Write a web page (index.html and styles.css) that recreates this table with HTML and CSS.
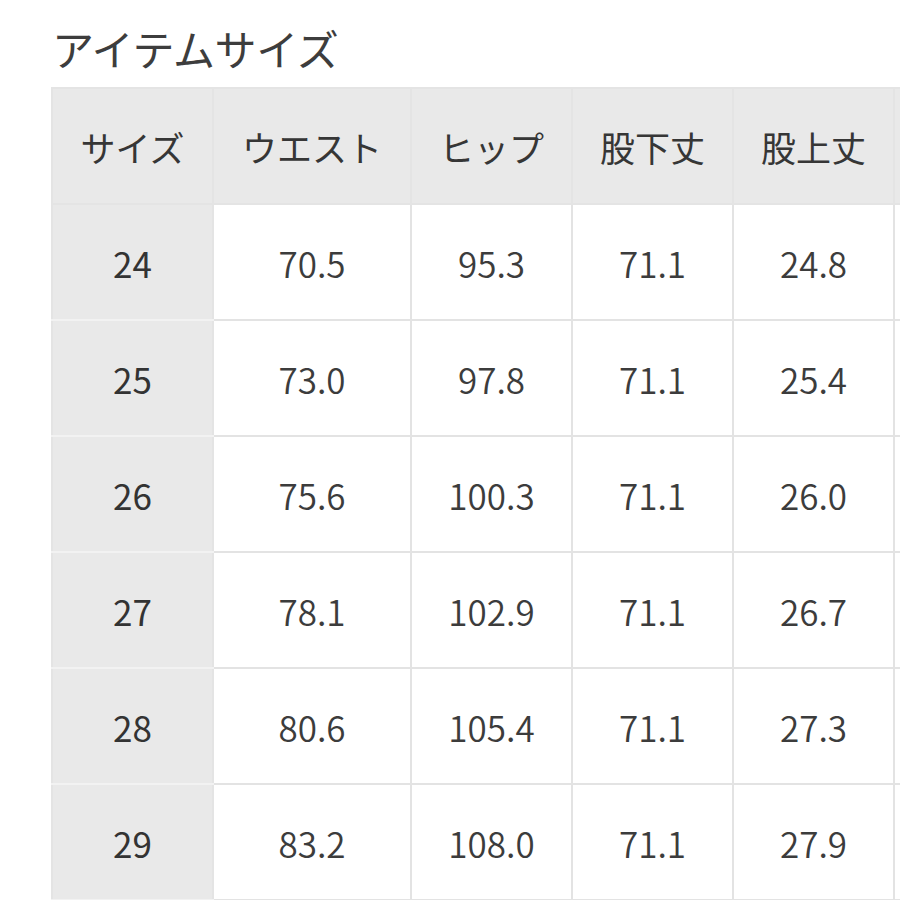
FILE: index.html
```html
<!DOCTYPE html>
<html lang="ja">
<head>
<meta charset="utf-8">
<title>アイテムサイズ</title>
<link rel="stylesheet" href="styles.css">
</head>
<body>
<div class="page">
  <h2 class="title">アイテムサイズ</h2>
  <div class="table-clip">
    <table class="size-table">
      <colgroup>
        <col class="c-size"><col class="c-waist"><col class="c-std"><col class="c-std"><col class="c-std"><col class="c-std">
      </colgroup>
      <thead>
        <tr><th>サイズ</th><th>ウエスト</th><th>ヒップ</th><th>股下丈</th><th>股上丈</th><th></th></tr>
      </thead>
      <tbody>
        <tr><th>24</th><td>70.5</td><td>95.3</td><td>71.1</td><td>24.8</td><td></td></tr>
        <tr><th>25</th><td>73.0</td><td>97.8</td><td>71.1</td><td>25.4</td><td></td></tr>
        <tr><th>26</th><td>75.6</td><td>100.3</td><td>71.1</td><td>26.0</td><td></td></tr>
        <tr><th>27</th><td>78.1</td><td>102.9</td><td>71.1</td><td>26.7</td><td></td></tr>
        <tr><th>28</th><td>80.6</td><td>105.4</td><td>71.1</td><td>27.3</td><td></td></tr>
        <tr><th>29</th><td>83.2</td><td>108.0</td><td>71.1</td><td>27.9</td><td></td></tr>
        <tr><th></th><td></td><td></td><td></td><td></td><td></td></tr>
      </tbody>
    </table>
  </div>
</div>
</body>
</html>
```
FILE: styles.css
```css
html, body {
  margin: 0;
  padding: 0;
  background: #ffffff;
  overflow: hidden;
}
body {
  width: 900px;
  height: 900px;
  font-family: "Noto Sans CJK JP", "Noto Sans", sans-serif;
  color: #3b3b3b;
}
.page {
  padding: 23px 0 0 51px;
  height: 877px;
  overflow: hidden;
}
.title {
  margin: 0 0 14px 1px;
  font-size: 42px;
  line-height: 50px;
  font-weight: 400;
  color: #3d3d3d;
  letter-spacing: -0.3px;
}
.table-clip {
  width: 849px;
  height: 814px;
  overflow: hidden;
}
.size-table {
  border-collapse: collapse;
  table-layout: fixed;
  width: 1004px;
}
.c-size { width: 161px; }
.c-waist { width: 198px; }
.c-std { width: 161px; }
.size-table th,
.size-table td {
  height: 114px;
  padding: 0;
  border: 2px solid #e3e3e3;
  text-align: center;
  vertical-align: middle;
  font-size: 35px;
  line-height: 1;
  white-space: nowrap;
}
.size-table thead th {
  background: #e9e9e9;
  font-weight: 400;
  font-size: 35px;
  color: #363636;
  border-color: #e4e4e4;
}
.size-table tbody th {
  background: #e9e9e9;
  font-weight: 400;
  color: #333333;
  border-color: #e4e4e4;
  border-bottom-color: #f2f2f2;
}
.size-table td {
  background: #ffffff;
  font-weight: 350;
  color: #3c3c3c;
}
```
